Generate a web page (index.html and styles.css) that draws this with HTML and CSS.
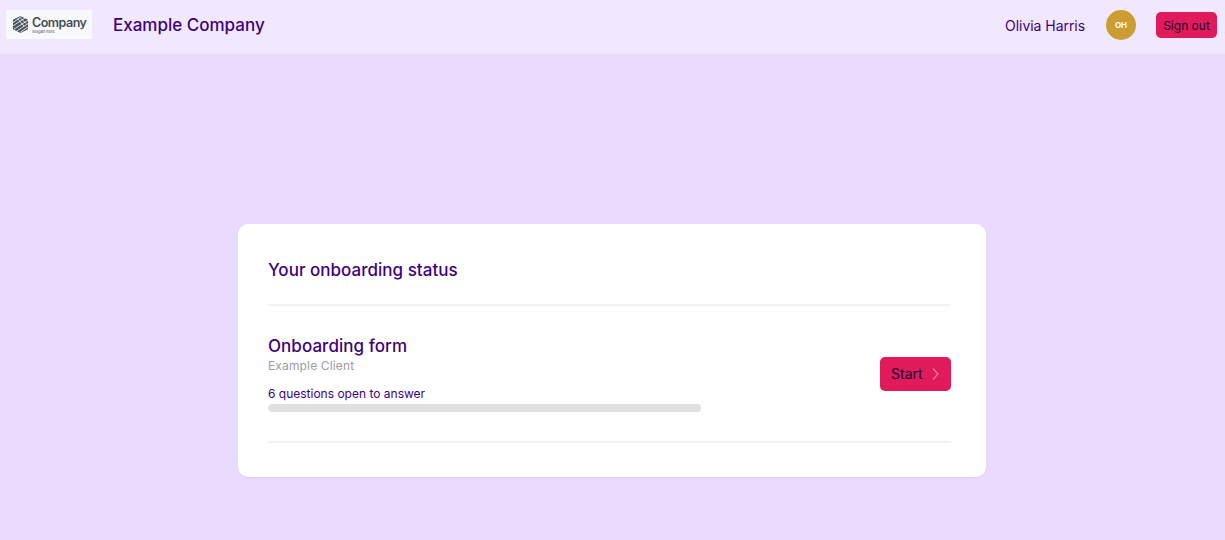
FILE: index.html
```html
<!DOCTYPE html>
<html>
<head>
  <title>Onboarding status</title>
  <meta name="viewport" content="width=device-width, initial-scale=1.0">
  <link rel="stylesheet" href="styles.css">
</head>
<body>
  <header class="topbar">
    <div class="logo">
      <svg class="logo-mark" viewBox="0 0 18 20" width="17" height="19">
        <path d="M9 1 L17 5 L17 15 L9 19 L1 15 L1 5 Z" fill="#4a525c"/>
        <path d="M1 8 L10 1.5 M1 11.5 L14 3 M2 15 L17 5.5 M5 17 L17 9 M9 18 L17 12.5 M6 4 L13 12 M9 3 L15 9" stroke="#f8f9fd" stroke-width="0.9" fill="none"/>
      </svg>
      <div class="logo-text">
        <span class="logo-name">Company</span>
        <span class="logo-slogan">Slogan here</span>
      </div>
    </div>
    <div class="company-name">Example Company</div>
    <div class="user-area">
      <span class="user-name">Olivia Harris</span>
      <span class="avatar">OH</span>
      <button class="signout">Sign out</button>
    </div>
  </header>

  <main class="content">
    <section class="card">
      <h2 class="card-title">Your onboarding status</h2>
      <div class="form-row">
        <div class="form-info">
          <h3 class="form-name">Onboarding form</h3>
          <div class="client">Example Client</div>
          <div class="open-count">6 questions open to answer</div>
          <div class="progress"></div>
        </div>
        <button class="start">Start
          <svg viewBox="0 0 7 12" width="7" height="12" fill="none" stroke="#f27fa3" stroke-width="1.2"><path d="M1 .6 L6 6 L1 11.4"/></svg>
        </button>
      </div>
    </section>
  </main>
</body>
</html>
```
FILE: styles.css
```css
:root {
  --purple: #3d0080;
  --pink: #e01a5b;
  --page-bg: #eadbfe;
  --bar-bg: #f2e8fe;
  --line: #f2f2f2;
}

* {
  margin: 0;
  padding: 0;
  box-sizing: border-box;
}

body {
  font-family: 'Inter', 'Lato', sans-serif;
  background: var(--page-bg);
  color: var(--purple);
  min-height: 100vh;
}

button {
  font-family: inherit;
  border: none;
  cursor: pointer;
  color: #1c0a2e;
}

.topbar {
  display: flex;
  align-items: center;
  height: 55px;
  background: var(--bar-bg);
  border-bottom: 1px solid #e6dfee;
  padding: 0 8px 4px 6px;
}

.logo {
  display: flex;
  align-items: center;
  gap: 3px;
  width: 86px;
  height: 29px;
  margin-bottom: 1px;
  padding-left: 6px;
  background: #f8f9fd;
}

.logo-text {
  display: flex;
  flex-direction: column;
  color: #454d57;
  padding-top: 2px;
}

.logo-name {
  font-size: 12.5px;
  line-height: 12px;
  font-weight: 600;
  letter-spacing: -0.5px;
}

.logo-slogan {
  font-size: 4px;
  line-height: 5px;
}

.company-name {
  margin-left: 21px;
  font-size: 17px;
  font-weight: 500;
}

.user-area {
  margin-left: auto;
  display: flex;
  align-items: center;
}

.user-name {
  font-size: 14px;
  letter-spacing: -0.05px;
}

.avatar {
  margin-left: 21px;
  width: 30px;
  height: 30px;
  border-radius: 50%;
  background: #cc9d33;
  color: #fff;
  font-size: 8px;
  font-weight: 700;
  display: flex;
  align-items: center;
  justify-content: center;
}

.signout {
  margin-left: 20px;
  width: 61px;
  height: 26px;
  border-radius: 5px;
  background: var(--pink);
  font-size: 12px;
}

.content {
  display: flex;
  justify-content: center;
  padding: 169px 1px 0 0;
}

.card {
  width: 748px;
  height: 253px;
  background: #fff;
  border-radius: 10px;
  padding: 0 35px 0 30px;
  box-shadow: 0 1px 2px rgba(66, 0, 127, 0.08);
}

.card-title {
  height: 82px;
  padding-top: 33px;
  font-size: 17px;
  line-height: 26px;
  font-weight: 500;
  letter-spacing: 0.02px;
  border-bottom: 2px solid var(--line);
}

.form-row {
  display: flex;
  align-items: center;
  justify-content: space-between;
  height: 137px;
  border-bottom: 2px solid var(--line);
}

.form-name {
  font-size: 17px;
  line-height: 21px;
  font-weight: 500;
  letter-spacing: 0.05px;
}

.client {
  font-size: 12px;
  line-height: 18px;
  color: #9c9c9c;
  letter-spacing: 0.15px;
}

.open-count {
  margin-top: 11px;
  font-size: 12px;
  line-height: 16px;
}

.progress {
  width: 433px;
  height: 8px;
  margin-top: 2px;
  border-radius: 4px;
  background: #e0e0e0;
}

.start {
  display: flex;
  align-items: center;
  gap: 9px;
  width: 71px;
  height: 34px;
  padding-left: 11px;
  border-radius: 5px;
  background: var(--pink);
  font-size: 14px;
}
```
